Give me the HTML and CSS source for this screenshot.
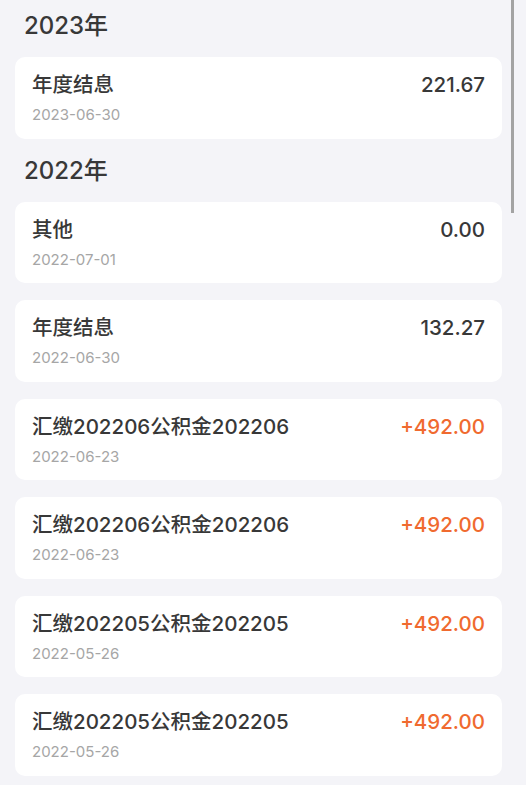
FILE: index.html
```html
<!DOCTYPE html>
<html lang="zh-CN">
<head>
  <meta charset="UTF-8">
  <meta name="viewport" content="width=device-width, initial-scale=1.0">
  <title>公积金明细</title>
  <link rel="stylesheet" href="styles.css">
</head>
<body>
  <div class="page">
    <section class="year">
      <h2 class="year-title">2023年</h2>
      <div class="record">
        <div class="record-main">
          <div class="record-name">年度结息</div>
          <div class="record-date">2023-06-30</div>
        </div>
        <div class="record-amount">221.67</div>
      </div>
    </section>

    <section class="year">
      <h2 class="year-title">2022年</h2>
      <div class="record">
        <div class="record-main">
          <div class="record-name">其他</div>
          <div class="record-date">2022-07-01</div>
        </div>
        <div class="record-amount">0.00</div>
      </div>
      <div class="record">
        <div class="record-main">
          <div class="record-name">年度结息</div>
          <div class="record-date">2022-06-30</div>
        </div>
        <div class="record-amount">132.27</div>
      </div>
      <div class="record">
        <div class="record-main">
          <div class="record-name">汇缴202206公积金202206</div>
          <div class="record-date">2022-06-23</div>
        </div>
        <div class="record-amount income">+492.00</div>
      </div>
      <div class="record">
        <div class="record-main">
          <div class="record-name">汇缴202206公积金202206</div>
          <div class="record-date">2022-06-23</div>
        </div>
        <div class="record-amount income">+492.00</div>
      </div>
      <div class="record">
        <div class="record-main">
          <div class="record-name">汇缴202205公积金202205</div>
          <div class="record-date">2022-05-26</div>
        </div>
        <div class="record-amount income">+492.00</div>
      </div>
      <div class="record">
        <div class="record-main">
          <div class="record-name">汇缴202205公积金202205</div>
          <div class="record-date">2022-05-26</div>
        </div>
        <div class="record-amount income">+492.00</div>
      </div>
    </section>
  </div>
  <div class="scroll-thumb"></div>
</body>
</html>
```

FILE: styles.css
```css
* {
  margin: 0;
  padding: 0;
  box-sizing: border-box;
}

html,
body {
  height: 100%;
  overflow: hidden;
}

body {
  background: #f4f4f8;
  font-family: Inter, "Noto Sans CJK SC", sans-serif;
  color: #333;
}

.page {
  padding: 0 24px 0 15px;
}

.year-title {
  padding: 16px 9px 15px;
  font-size: 24px;
  line-height: 32px;
  font-weight: 500;
  color: #383838;
}

.year:first-child .year-title {
  padding-top: 10px;
}

.record {
  display: flex;
  justify-content: space-between;
  align-items: flex-start;
  background: #fff;
  border-radius: 10px;
  padding: 13px 17px 13.5px;
}

.record + .record {
  margin-top: 17px;
}

.record-name {
  font-size: 20.5px;
  line-height: 30px;
  font-weight: 500;
  color: #383838;
}

.record-date {
  margin-top: 4px;
  font-size: 15px;
  line-height: 21px;
  color: #a6a6a6;
}

.record-amount {
  font-size: 20.5px;
  line-height: 30px;
  font-weight: 500;
  color: #383838;
}

.record-amount.income {
  color: #f06a2f;
}

.scroll-thumb {
  position: absolute;
  top: 0;
  left: 511px;
  width: 3px;
  height: 213px;
  background: #a3a3a3;
}
```
